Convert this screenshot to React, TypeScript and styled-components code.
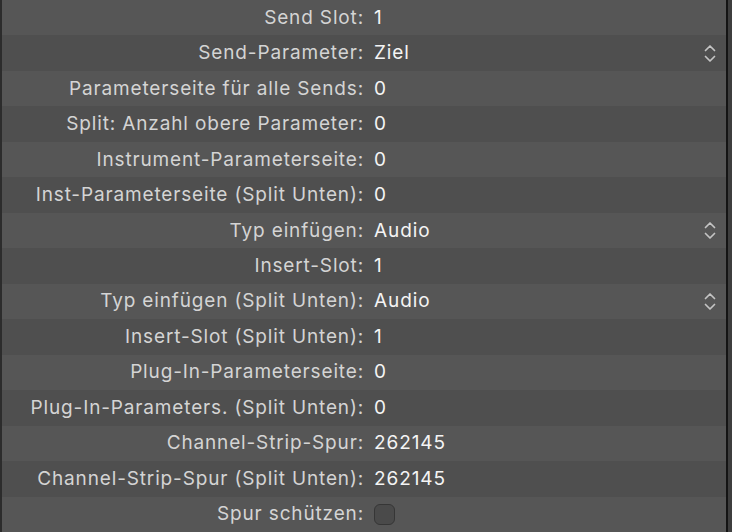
import React from "react";
import styled, { createGlobalStyle } from "styled-components";

const Global = createGlobalStyle`
  html, body { margin: 0; padding: 0; background: #3c3c3c; }
  body { font-family: Inter, "Liberation Sans", sans-serif; -webkit-font-smoothing: antialiased; }
`;

const Window = styled.div`
  display: flex;
  width: 732px;
  height: 532px;
  overflow: hidden;
  background: #3e3e3e;
`;

const Panel = styled.div`
  width: 728px;
  box-sizing: border-box;
  display: flex;
  flex-direction: column;
  border-left: 2px solid #2c2c2c;
  border-right: 2px solid #141414;
`;

const Row = styled.div<{ $alt: boolean }>`
  flex: 1 1 0;
  display: grid;
  grid-template-columns: 362px 1fr 40px;
  align-items: center;
  background: ${(p) => (p.$alt ? "#4f4f4f" : "#565656")};
`;

const Label = styled.div`
  text-align: right;
  color: #d4d4d4;
  font-size: 19px;
  letter-spacing: 0.85px;
  white-space: nowrap;
  margin-top: -1px;
`;

const Value = styled.div`
  padding-left: 10px;
  color: #f4f4f4;
  font-size: 19px;
  letter-spacing: 0.9px;
  white-space: nowrap;
  display: flex;
  align-items: center;
  margin-top: -1px;
`;

const Stepper = styled.div`
  display: flex;
  justify-content: center;
  padding-left: 8px;
`;

const Check = styled.span`
  display: inline-block;
  width: 19px;
  height: 19px;
  margin-top: 1px;
  border-radius: 6px;
  background: #4a4a4a;
  border: 1.5px solid #363636;
`;

const Chevrons = () => (
  <svg width="12" height="19" viewBox="0 0 12 19" fill="none">
    <path d="M1.5 6.5 L6 2 L10.5 6.5" stroke="#c4c4c4" strokeWidth="1.7" strokeLinecap="round" strokeLinejoin="round" />
    <path d="M1.5 12.5 L6 17 L10.5 12.5" stroke="#c4c4c4" strokeWidth="1.7" strokeLinecap="round" strokeLinejoin="round" />
  </svg>
);

type Item = { label: string; value?: string; popup?: boolean; check?: boolean };

const items: Item[] = [
  { label: "Send Slot:", value: "1" },
  { label: "Send-Parameter:", value: "Ziel", popup: true },
  { label: "Parameterseite für alle Sends:", value: "0" },
  { label: "Split: Anzahl obere Parameter:", value: "0" },
  { label: "Instrument-Parameterseite:", value: "0" },
  { label: "Inst-Parameterseite (Split Unten):", value: "0" },
  { label: "Typ einfügen:", value: "Audio", popup: true },
  { label: "Insert-Slot:", value: "1" },
  { label: "Typ einfügen (Split Unten):", value: "Audio", popup: true },
  { label: "Insert-Slot (Split Unten):", value: "1" },
  { label: "Plug-In-Parameterseite:", value: "0" },
  { label: "Plug-In-Parameters. (Split Unten):", value: "0" },
  { label: "Channel-Strip-Spur:", value: "262145" },
  { label: "Channel-Strip-Spur (Split Unten):", value: "262145" },
  { label: "Spur schützen:", check: true },
];

export default function App() {
  return (
    <>
      <Global />
      <Window>
        <Panel>
          {items.map((it, i) => (
            <Row key={i} $alt={i % 2 === 1}>
              <Label>{it.label}</Label>
              <Value>{it.check ? <Check /> : it.value}</Value>
              <Stepper>{it.popup ? <Chevrons /> : null}</Stepper>
            </Row>
          ))}
        </Panel>
      </Window>
    </>
  );
}
